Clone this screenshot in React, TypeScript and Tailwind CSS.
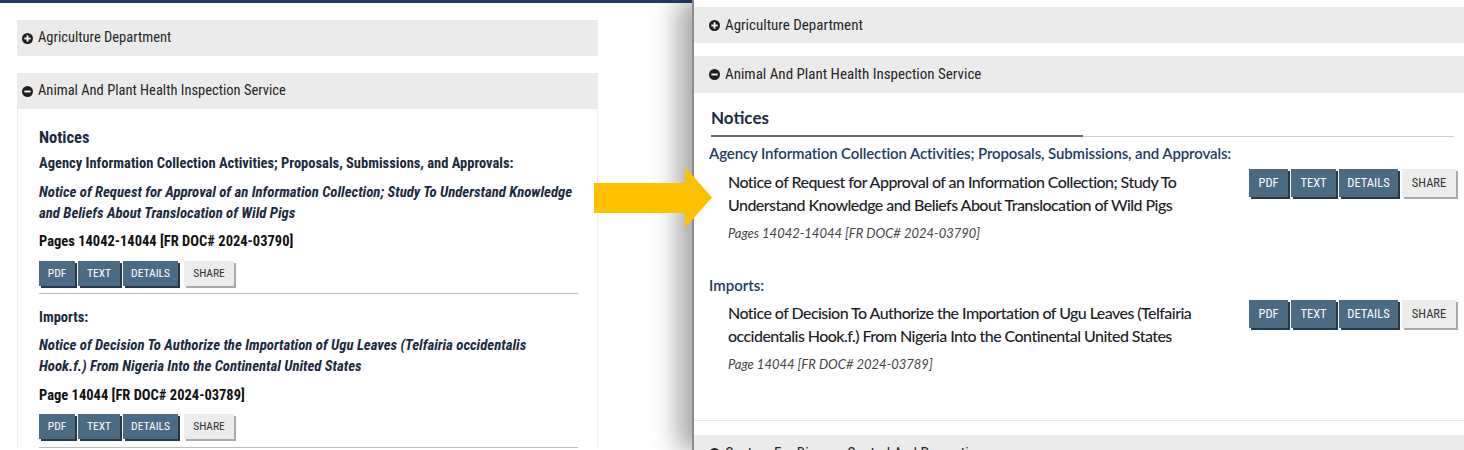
import React from "react";

const narrow = { fontFamily: '"Liberation Sans Narrow", "Roboto Condensed", Roboto, sans-serif' };
const lato = { fontFamily: 'Lato, "Noto Sans", sans-serif' };

function PlusIcon({ minus = false, size = 11 }: { minus?: boolean; size?: number }) {
  return (
    <svg width={size} height={size} viewBox="0 0 12 12" className="shrink-0">
      <circle cx="6" cy="6" r="6" fill="#1f1f24" />
      <rect x="2.6" y="5" width="6.8" height="2" fill="#fff" />
      {!minus && <rect x="5" y="2.6" width="2" height="6.8" fill="#fff" />}
    </svg>
  );
}

function Header({ label, open = false, className = "" }: { label: string; open?: boolean; className?: string }) {
  return (
    <div className={`flex items-center bg-[#ebebeb] text-[#262626] ${className}`} style={narrow}>
      <PlusIcon minus={open} />
      <span className="ml-[5px]">{label}</span>
    </div>
  );
}

function OldButtons() {
  const blue = "h-[25px] flex items-center justify-center bg-[#4b6a84] text-white shadow-[2px_2px_0_#25384a]";
  return (
    <div className="flex text-[11.5px] uppercase" style={narrow}>
      <div className={`${blue} w-[36px]`}>PDF</div>
      <div className={`${blue} w-[42px] ml-[3px]`}>TEXT</div>
      <div className={`${blue} w-[55px] ml-[3px]`}>DETAILS</div>
      <div className="h-[25px] w-[50px] ml-[6px] flex items-center justify-center bg-[#ececec] text-[#333] shadow-[2px_2px_0_#a9a9a9]">SHARE</div>
    </div>
  );
}

function NewButtons() {
  const blue = "h-[28px] flex items-center justify-center bg-[#4b6a84] text-white shadow-[2px_2px_0_#25384a]";
  return (
    <div className="flex text-[12.5px] uppercase shrink-0" style={narrow}>
      <div className={`${blue} w-[39px]`}>PDF</div>
      <div className={`${blue} w-[45px] ml-[3px]`}>TEXT</div>
      <div className={`${blue} w-[59px] ml-[3px]`}>DETAILS</div>
      <div className="h-[28px] w-[54px] ml-[4px] flex items-center justify-center bg-[#ececec] text-[#333] shadow-[2px_2px_0_#a9a9a9]">SHARE</div>
    </div>
  );
}

function OldPanel() {
  return (
    <div className="w-[692px] shrink-0 border-t-[3px] border-[#1d3f66] pl-[17px] pt-[17px]">
      <div className="w-[581px]">
        <Header label="Agriculture Department" className="h-[36px] pl-[5px] text-[14.5px]" />
        <Header label="Animal And Plant Health Inspection Service" open className="h-[36px] pl-[5px] text-[14.5px] mt-[17px]" />
        <div className="border-x border-[#eeeeee] pl-[21px] pr-[19px] pt-[19px] text-[#1b2a3d]" style={narrow}>
          <div className="text-[16.5px] leading-[20px] font-bold">Notices</div>
          <div className="text-[14.5px] leading-[18px] font-bold mt-[7px]">
            Agency Information Collection Activities; Proposals, Submissions, and Approvals:
          </div>
          <div className="text-[14.8px] leading-[21px] font-bold italic mt-[9px]">
            Notice of Request for Approval of an Information Collection; Study To Understand Knowledge and Beliefs About Translocation of Wild Pigs
          </div>
          <div className="text-[14.5px] leading-[18px] font-bold mt-[9px] text-[#111]">Pages 14042-14044 [FR DOC# 2024-03790]</div>
          <div className="mt-[10px]">
            <OldButtons />
          </div>
          <div className="h-px bg-[#bdbdbd] mt-[7px]" />
          <div className="text-[14.5px] leading-[18px] font-bold mt-[15px]">Imports:</div>
          <div className="text-[14.8px] leading-[21px] font-bold italic mt-[8px] w-[500px]">
            Notice of Decision To Authorize the Importation of Ugu Leaves (Telfairia occidentalis Hook.f.) From Nigeria Into the Continental United States
          </div>
          <div className="text-[14.5px] leading-[18px] font-bold mt-[10px] text-[#111]">Page 14044 [FR DOC# 2024-03789]</div>
          <div className="mt-[9px]">
            <OldButtons />
          </div>
          <div className="h-px bg-[#bdbdbd] mt-[8px]" />
        </div>
      </div>
    </div>
  );
}

function Entry({ title, pages }: { title: string; pages: string }) {
  return (
    <div className="flex items-start pl-[19px] pr-[8px]">
      <div className="flex-1">
        <div className="text-[16px] leading-[22.5px] font-medium tracking-[-0.55px] text-[#1d1d28] w-[485px]">{title}</div>
        <div className="text-[13px] leading-[18px] italic text-[#444] mt-[8px]">{pages}</div>
      </div>
      <div className="mt-[-2px]">
        <NewButtons />
      </div>
    </div>
  );
}

function NewPanel() {
  return (
    <div className="relative z-10 flex-1 bg-white border-l-2 border-[#8c8c8c] shadow-[-14px_0_24px_rgba(0,0,0,0.35)] pt-[7px]">
      <Header label="Agriculture Department" className="h-[36px] pl-[15px] text-[15px]" />
      <Header label="Animal And Plant Health Inspection Service" open className="h-[37px] pl-[15px] text-[15px] mt-[13px]" />
      <div className="border-b border-[#e6e6e6] pl-[15px] pt-[14px] pb-[47px]" style={lato}>
        <div className="pl-[2px] pr-[10px]">
          <div className="text-[17px] leading-[22px] font-bold text-[#1b2a3d]">Notices</div>
          <div className="flex items-end mt-[6px]">
            <div className="w-[372px] h-[2px] bg-[#666]" />
            <div className="flex-1 h-px bg-[#cfcfcf]" />
          </div>
        </div>
        <div className="text-[15px] leading-[20px] font-semibold tracking-[-0.12px] text-[#1e3c5e] mt-[6px]">
          Agency Information Collection Activities; Proposals, Submissions, and Approvals:
        </div>
        <div className="mt-[8px]">
          <Entry
            title="Notice of Request for Approval of an Information Collection; Study To Understand Knowledge and Beliefs About Translocation of Wild Pigs"
            pages="Pages 14042-14044 [FR DOC# 2024-03790]"
          />
        </div>
        <div className="text-[15px] leading-[20px] font-semibold text-[#1e3c5e] mt-[33px]">Imports:</div>
        <div className="mt-[7px]">
          <Entry
            title="Notice of Decision To Authorize the Importation of Ugu Leaves (Telfairia occidentalis Hook.f.) From Nigeria Into the Continental United States"
            pages="Page 14044 [FR DOC# 2024-03789]"
          />
        </div>
      </div>
      <Header label="Centers For Disease Control And Prevention" className="h-[36px] pl-[15px] text-[15px] mt-[14px]" />
    </div>
  );
}

export default function App() {
  return (
    <div className="relative flex w-[1464px] h-[450px] overflow-hidden bg-white">
      <OldPanel />
      <NewPanel />
      <svg width="118" height="61" viewBox="0 0 118 61" className="absolute left-[594px] top-[167px] z-20">
        <polygon points="0,16 91,16 91,0 118,30.5 91,61 91,46 0,46" fill="#ffc000" />
      </svg>
    </div>
  );
}
